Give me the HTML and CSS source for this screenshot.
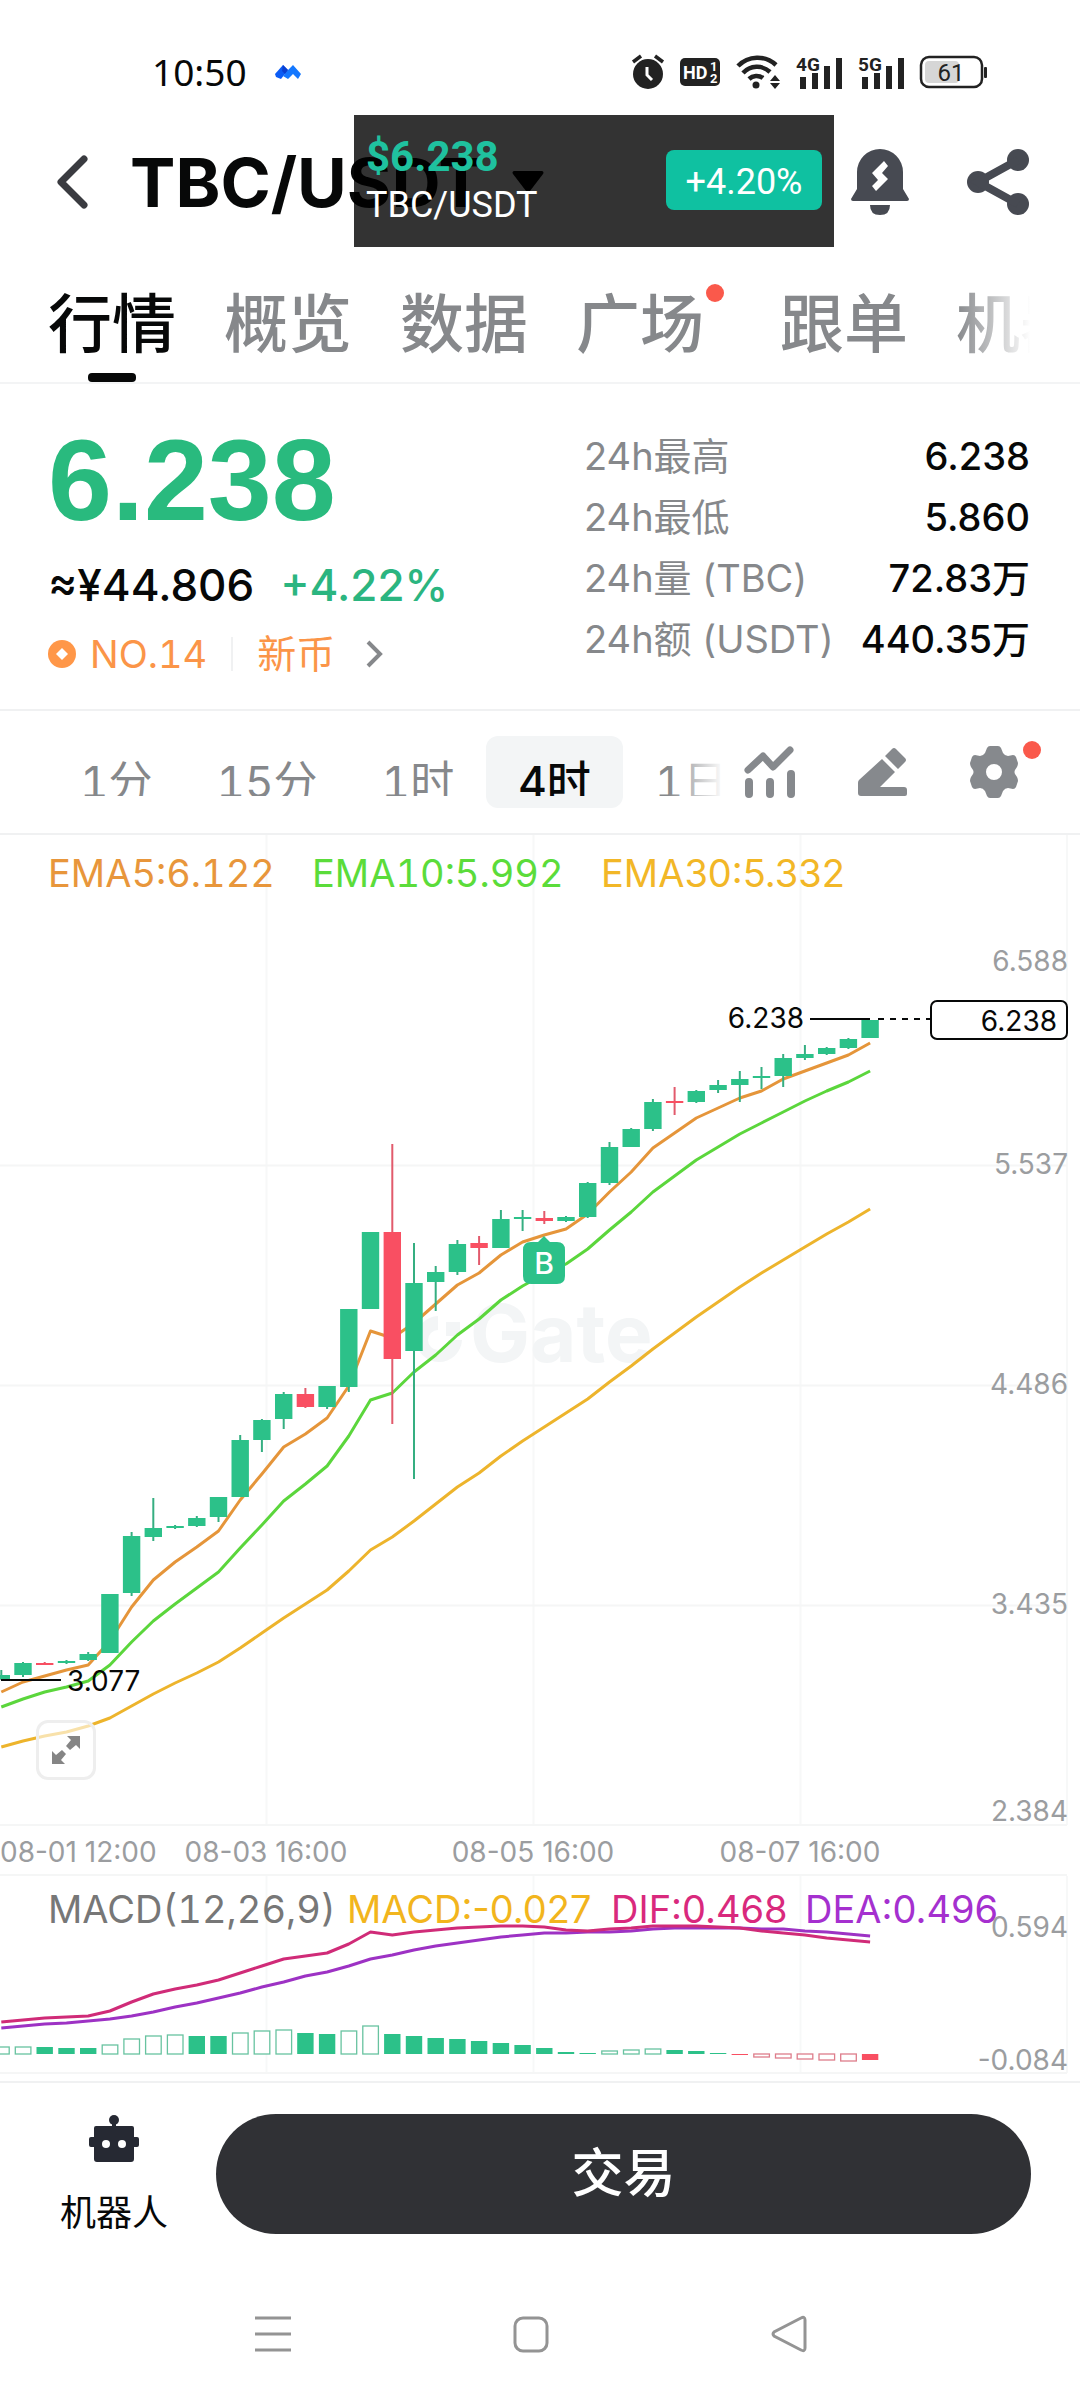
FILE: index.html
```html
<!DOCTYPE html>
<html lang="zh-CN">
<head>
<meta charset="utf-8">
<meta name="viewport" content="width=device-width, initial-scale=1">
<title>TBC/USDT</title>
<link rel="stylesheet" href="styles.css">
</head>
<body>
<div class="app">
  <div class="status">
    <div class="status-left">
      <span class="clock">10:50</span>
      <svg width="26" height="14" viewBox="0 0 26 14" aria-hidden="true">
        <path d="M0 9 8 0l5 5-7 9-5-2z" fill="#0b5cf5"/>
        <path d="M13 5 18 0l8 9-3 5-5-5-5 5-5-3z" fill="#1478ff"/>
        <path d="M8 0l5 5-3 4-3-3z" fill="#0a3fd0"/>
      </svg>
    </div>
    <div class="status-right">
      <svg width="32" height="36" viewBox="0 0 32 36" aria-hidden="true">
        <circle cx="16" cy="20" r="15" fill="#222"/>
        <path d="M1 8 9 2M31 8 23 2" stroke="#222" stroke-width="3.5"/>
        <path d="M15 13v8l5 5" fill="none" stroke="#fff" stroke-width="3"/>
      </svg>
      <svg width="40" height="28" viewBox="0 0 40 28" aria-hidden="true">
        <rect width="40" height="28" rx="5" fill="#222"/>
        <text class="hd" x="3" y="21">HD</text>
        <text class="hd-sim" x="30" y="13">1</text>
        <text class="hd-sim" x="30" y="25">2</text>
      </svg>
      <svg width="44" height="34" viewBox="0 0 44 34" fill="none" stroke="#222" stroke-width="4.5" aria-hidden="true">
        <path d="M2 11a27 27 0 0 1 38-1M7 18a19 19 0 0 1 27-1M13 24a11 11 0 0 1 14-1"/>
        <circle cx="20" cy="30" r="3.5" fill="#222" stroke="none"/>
        <path d="M34 26l5-6 5 6zM34 28l5 6 5-6z" fill="#222" stroke="none"/>
      </svg>
      <svg width="46" height="34" viewBox="0 0 46 34" aria-hidden="true">
        <path d="M4 22h6v12H4zM16 18h6v16h-6zM28 11h6v23h-6zM40 3h6v31h-6z" fill="#222"/>
        <text class="net" x="0" y="16">4G</text>
      </svg>
      <svg width="46" height="34" viewBox="0 0 46 34" aria-hidden="true">
        <path d="M4 22h6v12H4zM16 18h6v16h-6zM28 11h6v23h-6zM40 3h6v31h-6z" fill="#222"/>
        <text class="net" x="0" y="16">5G</text>
      </svg>
      <svg width="68" height="32" viewBox="0 0 68 32" aria-hidden="true">
        <rect x="1" y="1" width="61" height="30" rx="8" fill="#fff" stroke="#222" stroke-width="2.5"/>
        <rect x="5" y="5" width="34" height="22" rx="4" fill="#d6d6d6"/>
        <rect x="64" y="11" width="3" height="11" rx="1" fill="#222"/>
        <text class="bat" x="31" y="25" text-anchor="middle">61</text>
      </svg>
    </div>
  </div>

  <header class="header">
    <button class="icon-btn" aria-label="返回">
      <svg width="34" height="54" viewBox="0 0 34 54"><path d="M29 4 6 27l23 23" fill="none" stroke="#3a3b40" stroke-width="7" stroke-linecap="round" stroke-linejoin="round"/></svg>
    </button>
    <h1 class="pair">TBC/USDT</h1>
    <svg class="caret" width="32" height="22" viewBox="0 0 32 22" aria-hidden="true"><path d="M2 0h28a2 2 0 0 1 1 3L18 20q-2 2-4 0L1 3a2 2 0 0 1 1-3z"/></svg>
    <div class="actions">
      <button class="icon-btn" aria-label="提醒">
        <svg width="58" height="66" viewBox="0 0 58 66" fill="#474a52">
          <path d="M29 0a23 23 0 0 1 23 23v17l6 10q0 2-2 2H2q-2 0-2-2l6-10V23A23 23 0 0 1 29 0zM19 56h20q0 10-10 10T19 56z"/>
          <path d="M33 12l4 5-6 7 6 6L25 42l-4-5 6-6-6-7z" fill="#fff"/>
        </svg>
      </button>
      <button class="icon-btn" aria-label="分享">
        <svg width="62" height="66" viewBox="0 0 62 66" fill="#474a52">
          <circle cx="51" cy="11" r="11"/><circle cx="51" cy="55" r="11"/><circle cx="11" cy="33" r="11"/>
          <path d="M51 11 11 33l40 22" fill="none" stroke="#474a52" stroke-width="8"/>
        </svg>
      </button>
    </div>
  </header>

  <aside class="floating">
    <div>
      <div class="float-price">$6.238</div>
      <div class="float-pair">TBC/USDT</div>
    </div>
    <span class="float-badge">+4.20%</span>
  </aside>

  <nav class="tabs">
    <a href="#quote" class="tab active">行情</a>
    <a href="#overview" class="tab">概览</a>
    <a href="#data" class="tab">数据</a>
    <a href="#square" class="tab dotted">广场</a>
    <a href="#copy" class="tab">跟单</a>
    <a href="#bots" class="tab">机器人</a>
  </nav>

  <section class="summary">
    <div class="quote">
      <div class="price">6.238</div>
      <div class="fiat"><span>≈¥44.806</span><span class="up">+4.22%</span></div>
      <a class="tags" href="#rank">
        <svg width="28" height="28" viewBox="0 0 28 28" aria-hidden="true"><circle cx="14" cy="14" r="14" fill="#ff9748"/><path d="M14 8l6 6-6 6-6-6z" fill="#fff"/></svg>
        <span class="rank">NO.14</span>
        <span class="newcoin">新币</span>
        <svg class="more" width="18" height="28" viewBox="0 0 18 28" aria-hidden="true"><path d="M3 2l12 12L3 26" fill="none" stroke="#86888b" stroke-width="4"/></svg>
      </a>
    </div>
    <dl class="stats">
      <dt>24h最高</dt><dd>6.238</dd>
      <dt>24h最低</dt><dd>5.860</dd>
      <dt>24h量 (TBC)</dt><dd>72.83万</dd>
      <dt>24h额 (USDT)</dt><dd>440.35万</dd>
    </dl>
  </section>

  <section class="toolbar">
    <div class="frames">
      <button class="frame"><span>1分</span></button>
      <button class="frame"><span>15分</span></button>
      <button class="frame"><span>1时</span></button>
      <button class="frame selected"><span>4时</span></button>
      <button class="frame"><span>1日</span></button>
    </div>
    <div class="tools">
      <button class="icon-btn" aria-label="指标">
        <svg width="52" height="52" viewBox="0 0 52 52" fill="none" stroke="#86898d" stroke-linecap="round" stroke-linejoin="round">
          <path d="M4 24 19 10l10 11L46 4" stroke-width="7"/>
          <path d="M5 36v12M26 36v12M47 28v20" stroke-width="8"/>
        </svg>
      </button>
      <button class="icon-btn" aria-label="画线">
        <svg width="50" height="50" viewBox="0 0 50 50" fill="#86898d">
          <path d="M24 12 37 25 22 40h24q3 0 3 3v4q0 2-2 2H3q-3 0-3-3V36q0-2 1-3zM27 9l7-7q2-2 4 0l9 9q2 2 0 4l-7 7z"/>
        </svg>
      </button>
      <button class="icon-btn gear" aria-label="设置">
        <svg width="48" height="52" viewBox="0 0 48 52">
          <path fill="#86898d" fill-rule="evenodd" d="M20 0h8q2 0 3 2l2 5q2 3 5 3l5-1q2 0 3 2l2 6q0 2-1 4l-2 3q-1 2 0 4l2 3q1 2 1 4l-2 6q-1 2-3 2l-5-1q-3 0-5 3l-2 5q-1 2-3 2h-8q-2 0-3-2l-2-5q-2-3-5-3l-5 1q-2 0-3-2l-2-6q0-2 1-4l2-3q1-2 0-4l-2-3q-1-2-1-4l2-6q1-2 3-2l5 1q3 0 5-3l2-5q1-2 3-2zM24 18a8 8 0 1 0 0 16 8 8 0 0 0 0-16z"/>
        </svg>
      </button>
    </div>
  </section>

  <section class="chart">
    <svg id="chart" viewBox="0 835 1080 1246" role="img" aria-label="TBC/USDT 4时 K线图"></svg>
    <button class="expand" aria-label="全屏">
      <svg width="28" height="28" viewBox="0 0 28 28" fill="#858585"><path d="M15 0h13v13l-4-4-6 5-4-4 5-6zM13 28H0V15l4 4 6-5 4 4-5 6z"/></svg>
    </button>
  </section>

  <footer class="footer">
    <a class="bot" href="#bot">
      <svg width="50" height="48" viewBox="0 0 50 48" aria-hidden="true">
        <path d="M27 9v2h16q2 0 2 2v9h3q2 0 2 2v6q0 2-2 2h-3v12q0 3-3 3H8q-3 0-3-3V32H2q-2 0-2-2v-6q0-2 2-2h3v-9q0-2 2-2h16V9z" fill="#262933"/>
        <circle cx="25" cy="5" r="5" fill="#262933"/><circle cx="17" cy="29" r="4" fill="#fff"/><circle cx="33" cy="29" r="4" fill="#fff"/>
      </svg>
      <span>机器人</span>
    </a>
    <button class="trade">交易</button>
  </footer>

  <div class="sysnav">
    <button class="icon-btn" aria-label="最近任务"><svg width="36" height="38" viewBox="0 0 36 38"><path d="M0 3h36M0 19h36M0 35h36" stroke="#949494" stroke-width="3"/></svg></button>
    <button class="icon-btn" aria-label="主屏幕"><svg width="36" height="38" viewBox="0 0 36 38"><rect x="2" y="3" width="32" height="33" rx="8" fill="none" stroke="#949494" stroke-width="3"/></svg></button>
    <button class="icon-btn" aria-label="返回上一页"><svg width="36" height="38" viewBox="0 0 36 38"><path d="M30 3 3 17q-2 2 0 4l27 14q4 2 4-2V5q0-4-4-2z" fill="none" stroke="#949494" stroke-width="3"/></svg></button>
  </div>
</div>
<script src="chart.js"></script>
</body>
</html>
```

FILE: styles.css
```css
* { box-sizing: border-box; }
body {
  margin: 0;
  background: #fff;
  color: #070808;
  font-family: Inter, "Noto Sans CJK SC", sans-serif;
}
svg { display: block; overflow: visible; }
a { color: inherit; text-decoration: none; }
button { font: inherit; color: inherit; border: 0; padding: 0; background: none; }
.app { position: relative; min-height: 100vh; }
.icon-btn { display: block; flex: none; }

/* system status bar */
.status {
  display: flex;
  justify-content: space-between;
  align-items: center;
  height: 116px;
  padding: 28px 92px 0 152px;
}
.status-left { display: flex; align-items: center; gap: 28px; }
.status-right { display: flex; align-items: center; gap: 16px; }
.clock { font: 37px/40px "Noto Sans", sans-serif; }
.hd { fill: #fff; font: bold 18px Roboto, sans-serif; }
.hd-sim { fill: #fff; font: bold 13px Roboto, sans-serif; }
.net { fill: #222; stroke: #fff; stroke-width: 3px; paint-order: stroke; font: bold 19px Roboto, sans-serif; }
.bat { fill: #222; font: 24px Roboto, sans-serif; }

/* pair header */
.header {
  display: flex;
  align-items: center;
  height: 131px;
  padding: 0 51px 0 55px;
}
.pair { margin: 0 0 0 41px; font-size: 68px; line-height: 80px; font-weight: 700; }
.caret { margin-left: 28px; }
.actions { display: flex; gap: 58px; margin-left: auto; }

.floating {
  position: absolute;
  left: 354px;
  top: 115px;
  width: 480px;
  height: 132px;
  display: flex;
  justify-content: space-between;
  align-items: center;
  padding: 0 12px;
  background: rgba(0, 0, 0, 0.8);
  color: #fff;
  font-family: Roboto, sans-serif;
}
.float-price { font-size: 42px; line-height: 48px; font-weight: 700; color: #1fc19f; }
.float-pair { font-size: 36px; line-height: 48px; }
.float-badge {
  width: 156px;
  height: 60px;
  margin-bottom: 2px;
  border-radius: 8px;
  background: #0fc1a1;
  font-size: 36px;
  line-height: 64px;
  text-align: center;
}

/* section tabs */
.tabs {
  display: flex;
  gap: 48px;
  height: 137px;
  padding: 31px 0 0 48px;
  overflow: hidden;
  border-bottom: 2px solid #f3f4f5;
  position: relative;
}
.tabs::after {
  content: "";
  position: absolute;
  right: 0;
  top: 0;
  width: 124px;
  height: 130px;
  background: linear-gradient(90deg, rgba(255, 255, 255, 0), #fff 60%);
}
.tab {
  position: relative;
  flex: none;
  font-size: 64px;
  line-height: 92px;
  font-weight: 500;
  color: #86888b;
}
.tab.active { color: #070808; }
.tab.active::after {
  content: "";
  position: absolute;
  left: 40px;
  bottom: 0;
  width: 48px;
  height: 9px;
  border-radius: 4px;
  background: #070808;
}
.tab.dotted { padding-right: 28px; }
.tab.dotted::after, .gear::after {
  content: "";
  position: absolute;
  width: 18px;
  height: 18px;
  border-radius: 50%;
  background: #fa594b;
}
.tab.dotted::after { right: 8px; top: 6px; }

/* price summary */
.summary {
  display: flex;
  justify-content: space-between;
  height: 327px;
  padding: 42px 50px 0 48px;
  border-bottom: 2px solid #f0f1f2;
}
.price {
  font: bold 115px/108px "Liberation Sans", sans-serif;
  color: #29ba7e;
}
.fiat { display: flex; gap: 26px; margin-top: 24px; font-size: 44px; line-height: 54px; font-weight: 500; }
.up { color: #2bb580; }
.tags { display: flex; align-items: center; margin-top: 14px; font-size: 39px; line-height: 56px; color: #fb9548; }
.rank { margin-left: 14px; padding-right: 24px; border-right: 2px solid #f0f1f2; font-size: 38px; line-height: 34px; font-variant-numeric: tabular-nums; }
.newcoin { margin-left: 24px; }
.more { margin-left: 30px; }
.stats {
  display: grid;
  grid-template-columns: auto auto;
  grid-auto-rows: 61px;
  margin: 0;
  width: 446px;
  font-size: 38px;
  line-height: 61px;
  white-space: nowrap;
}
.stats dt { color: #86888b; }
.stats dd { margin: 0; text-align: right; font-weight: 500; }

/* interval toolbar */
.toolbar {
  display: flex;
  height: 124px;
  padding: 25px 62px 0 48px;
  border-bottom: 2px solid #f0f1f2;
}
.frames { position: relative; flex: 1; display: flex; min-width: 0; overflow: hidden; }
.frames::after {
  content: "";
  position: absolute;
  right: 0;
  top: 0;
  width: 56px;
  height: 72px;
  background: linear-gradient(90deg, rgba(255, 255, 255, 0), #fff);
}
.frame { flex: none; height: 72px; padding: 0 32px; border-radius: 12px; }
.frame span {
  display: block;
  height: 60px;
  margin-bottom: 12px;
  overflow: hidden;
  font-size: 44px;
  line-height: 92px;
  font-variant-numeric: tabular-nums;
  color: #86888b;
}
.frame.selected { background: #f3f5f6; }
.frame.selected span { color: #070808; font-weight: 500; }
.tools { display: flex; gap: 62px; height: 72px; align-items: center; margin-left: 20px; }
.gear { position: relative; }
.gear::after { left: 53px; top: -5px; }

/* chart */
.chart { position: relative; }
.chart > svg { width: 100%; height: auto; }
.chart text { font-family: Inter, sans-serif; }
.axis { font-size: 28px; fill: #9b9da0; }
.mark { font-size: 28px; fill: #070808; }
.legend { font-size: 38px; }
.tabular { font-variant-numeric: tabular-nums; }
.watermark { font-size: 80px; font-weight: 700; fill: #f3f5f6; }
.badge { font-size: 30px; font-weight: 500; fill: #fff; }
.expand {
  position: absolute;
  left: 36px;
  bottom: 301px;
  width: 60px;
  height: 60px;
  border: 3px solid #eee;
  border-radius: 12px;
  background: rgba(255, 255, 255, 0.6);
  display: grid;
  place-items: center;
}

/* bottom bar */
.footer {
  display: flex;
  align-items: flex-start;
  padding: 31px 49px 0 60px;
  border-top: 2px solid #f0f1f2;
}
.bot { display: flex; flex-direction: column; align-items: center; gap: 24px; padding-top: 1px; font-size: 36px; line-height: 52px; }
.trade {
  flex: 1;
  height: 120px;
  margin-left: 48px;
  border-radius: 60px;
  background: #303135;
  color: #fff;
  font-size: 52px;
  line-height: 110px;
  font-weight: 500;
}
.sysnav { display: flex; justify-content: space-between; padding: 76px 273px 40px 255px; }
```

FILE: chart.js
```js
const GREEN = "#2cc189", RED = "#f94f62";
const STEP = 21.72, FIRST = 1.3;
const x = i => FIRST + i * STEP;
const parts = [];
const line = (x1, y1, x2, y2, stroke, w, extra = "") =>
  parts.push(`<line x1="${x1}" y1="${y1}" x2="${x2}" y2="${y2}" stroke="${stroke}" stroke-width="${w}" ${extra}/>`);
const text = (cls, tx, ty, s, extra = "") =>
  parts.push(`<text class="${cls}" x="${tx}" y="${ty}" ${extra}>${s}</text>`);
const poly = (ys, stroke) =>
  parts.push(`<polyline points="${ys.map((y, i) => x(i).toFixed(1) + "," + y).join(" ")}" fill="none" stroke="${stroke}" stroke-width="3" stroke-linejoin="round"/>`);

// grid
[266.5, 533.5, 800.5, 1067].forEach(v => line(v, 835, v, 1825, "#f7f8f8", 2));
[266.5, 533.5, 800.5, 1067].forEach(v => line(v, 1876, v, 2073, "#f7f8f8", 2));
[1165.5, 1385.5, 1605.5, 1825, 1875, 2073].forEach(v => line(0, v, 1067, v, "#f5f6f6", 2));

// watermark
parts.push(`<path d="M438 1316a23 23 0 1 0 24 24h-14a10 10 0 1 1-10-10z" fill="#f3f5f6"/><path d="M446 1322h14v14h-14z" fill="#f3f5f6"/>`);
text("watermark", 470, 1362, "Gate");

// candles: high, top, bottom, low, down?
const candles = [
  [1670,1675,1679,1680],[1662,1663,1675,1677],[1662,1663,1665,1665,1],[1660,1661,1663,1664],
  [1652,1654,1660,1661],[1594,1594,1653,1653],[1532,1536,1593,1596],[1498,1528,1537,1541],
  [1525,1526,1528,1529],[1516,1518,1526,1527],[1497,1497,1517,1522],[1435,1440,1497,1497],
  [1419,1420,1440,1452],[1392,1394,1419,1429],[1388,1394,1407,1408,1],[1386,1386,1407,1409],
  [1309,1309,1387,1392],[1232,1232,1309,1309],[1144,1232,1359,1424,1],[1243,1283,1351,1479],
  [1266,1272,1282,1311],[1240,1244,1272,1275],[1236,1243,1248,1265,1],[1210,1219,1248,1248],
  [1210,1217,1219,1231],[1211,1218,1221,1224,1],[1216,1217,1221,1222],[1182,1183,1217,1218],
  [1142,1147,1183,1185],[1128,1129,1147,1147],[1099,1102,1129,1131],[1087,1101,1103,1115,1],
  [1090,1091,1102,1103],[1080,1085,1090,1093],[1071,1079,1085,1102],[1067,1076,1078,1089],
  [1054,1058,1076,1087],[1045,1054,1058,1060],[1047,1048,1054,1055],[1038,1039,1048,1049],
  [1020,1020,1038,1038]
];

const ema5 = [1692,1682,1676,1670,1665,1641,1607,1580,1562,1547,1531,1500,1474,1447,1434,1418,1386,1331,1338,1323,1304,1285,1273,1255,1242,1235,1229,1214,1192,1172,1148,1133,1118,1108,1098,1091,1079,1071,1063,1055,1043];
const ema10 = [1707,1699,1692,1687,1681,1665,1642,1621,1604,1588,1572,1548,1525,1501,1484,1466,1436,1400,1393,1372,1355,1335,1319,1300,1286,1274,1264,1249,1230,1212,1192,1176,1160,1147,1134,1123,1112,1101,1091,1082,1071];
const ema30 = [1747,1741,1736,1732,1726,1718,1706,1694,1683,1673,1662,1648,1633,1618,1604,1590,1571,1550,1537,1521,1504,1487,1473,1456,1441,1427,1413,1399,1382,1366,1349,1333,1317,1302,1287,1273,1260,1247,1234,1222,1209];
poly(ema30, "#edb42c");
poly(ema10, "#5bd63c");
poly(ema5, "#e5953a");

candles.forEach(([hi, top, bottom, lo, down], i) => {
  const c = down ? RED : GREEN;
  line(x(i).toFixed(1), hi, x(i).toFixed(1), lo, down ? "#e25a6c" : "#35ae81", 2);
  parts.push(`<rect x="${(x(i) - 8.7).toFixed(1)}" y="${top}" width="17.4" height="${bottom - top}" fill="${c}"/>`);
});

// buy marker
parts.push(`<path d="M544 1236l6 6h7q8 0 8 8v26q0 8-8 8h-26q-8 0-8-8v-26q0-8 8-8h7z" fill="${GREEN}"/>`);
text("badge", 544, 1274, "B", 'text-anchor="middle"');

// low, high and last price
line(1, 1680, 61, 1680, "#070808", 2);
text("mark", 67, 1691, "3.077");
text("mark", 804, 1028, "6.238", 'text-anchor="end"');
line(810, 1019, 870, 1019, "#070808", 2);
line(878, 1019, 931, 1019, "#070808", 2, 'stroke-dasharray="6 6"');
parts.push('<rect x="931" y="1001" width="136" height="38" rx="6" fill="#fff" stroke="#070808" stroke-width="2"/>');
text("mark", 1057, 1031, "6.238", 'text-anchor="end"');

// MACD pane: histogram values are [height, hollow?]
const hist = [[7,1],[7,1],[7],[6],[6],[9,1],[15,1],[18,1],[19,1],[18],[18],[21,1],[23,1],[24,1],[21],[20],[23,1],[28,1],[20],[18],[16],[15],[13],[11],[9],[6],[2],[1],[3,1],[4,1],[5,1],[4],[3],[1],[-1],[-3,1],[-4,1],[-5,1],[-6,1],[-7,1],[-6]];
hist.forEach(([h, hollow], i) => {
  const c = h > 0 ? GREEN : RED, height = Math.abs(h), y = h > 0 ? 2054 - h : 2054;
  parts.push(hollow
    ? `<rect x="${(x(i) - 7.7).toFixed(1)}" y="${y}" width="15.6" height="${height}" fill="#fff" stroke="${h > 0 ? "#68c3a0" : "#de7d8b"}" stroke-width="1.3"/>`
    : `<rect x="${(x(i) - 8.2).toFixed(1)}" y="${y}" width="16.4" height="${height}" fill="${c}"/>`);
});
text("legend tabular", 48, 1923, "MACD(12,26,9)", 'fill="#777"');
text("legend", 347, 1923, "MACD:-0.027", 'fill="#f2b51d"');
text("legend", 611, 1923, "DIF:0.468", 'fill="#d9297d"');
text("legend", 805, 1923, "DEA:0.496", 'fill="#a530cf"');
poly([2028,2026,2024,2023,2021,2019,2016,2012,2007,2003,1998,1993,1987,1982,1976,1972,1966,1959,1955,1950,1946,1943,1940,1937,1935,1933,1933,1932,1932,1931,1929,1928,1928,1928,1928,1929,1929,1931,1932,1934,1936], "#9d32c4");
poly([2022,2020,2018,2017,2016,2011,2002,1994,1989,1985,1980,1973,1966,1959,1956,1953,1944,1932,1935,1932,1930,1928,1927,1926,1926,1927,1930,1931,1929,1928,1926,1926,1926,1927,1928,1931,1933,1935,1938,1940,1942], "#d02b78");

// legends and axes
text("legend tabular", 48, 887, "EMA5:6.122", 'fill="#e8963b"');
text("legend tabular", 312, 887, "EMA10:5.992", 'fill="#5bdc3a"');
text("legend", 601, 887, "EMA30:5.332", 'fill="#f2b727"');
[["6.588",971],["5.537",1174],["4.486",1394],["3.435",1614],["2.384",1821],["0.594",1937],["-0.084",2070]]
  .forEach(([s, y]) => text("axis", 1068, y, s, 'text-anchor="end"'));
text("axis", 0, 1862, "08-01 12:00");
[["08-03 16:00",266],["08-05 16:00",533],["08-07 16:00",800]]
  .forEach(([s, cx]) => text("axis", cx, 1862, s, 'text-anchor="middle"'));

document.getElementById("chart").innerHTML = parts.join("");
```
